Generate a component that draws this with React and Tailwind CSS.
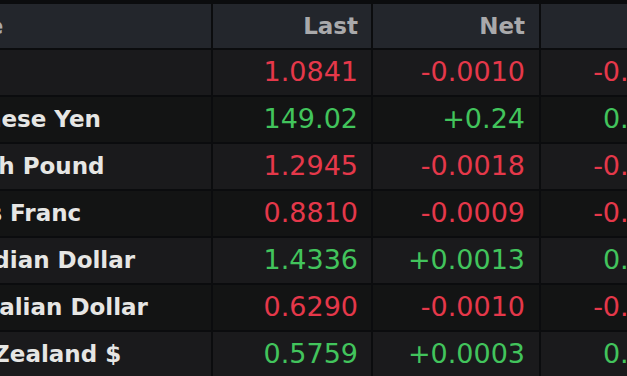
import React from "react";

const ROWS = [
  { name: "Euro", last: "1.0841", net: "-0.0010", pct: "-0.09", up: false },
  { name: "Japanese Yen", last: "149.02", net: "+0.24", pct: "0.16", up: true },
  { name: "British Pound", last: "1.2945", net: "-0.0018", pct: "-0.14", up: false },
  { name: "Swiss Franc", last: "0.8810", net: "-0.0009", pct: "-0.10", up: false },
  { name: "Canadian Dollar", last: "1.4336", net: "+0.0013", pct: "0.09", up: true },
  { name: "Australian Dollar", last: "0.6290", net: "-0.0010", pct: "-0.16", up: false },
  { name: "New Zealand $", last: "0.5759", net: "+0.0003", pct: "0.05", up: true },
];

export default function App() {
  return (
    <div className="w-[627px] h-[376px] overflow-hidden bg-[#0b0c0e] pt-[4px]" style={{ fontFamily: '"DejaVu Sans", sans-serif' }}>
      {/* table is wider than the window; first column runs off the left edge */}
      <div className="-ml-[87px] grid grid-cols-[298px_158px_166px_136px] gap-[2px] w-max">
        <div className="h-[44px] bg-[#23262c] flex items-center pl-4 text-[23px] font-bold text-[#a9a9ab]">Name</div>
        <div className="h-[44px] bg-[#23262c] flex items-center justify-end pr-[13px] text-[23px] font-bold text-[#a9a9ab]">Last</div>
        <div className="h-[44px] bg-[#23262c] flex items-center justify-end pr-[14px] text-[23px] font-bold text-[#a9a9ab]">Net</div>
        <div className="h-[44px] bg-[#23262c] flex items-center justify-end pr-[14px] text-[23px] font-bold text-[#a9a9ab]">%</div>

        {ROWS.map((r, i) => {
          const bg = i % 2 === 0 ? "bg-[#1a1a1c]" : "bg-[#131414]";
          const color = r.up ? "text-[#42c45c]" : "text-[#e5384a]";
          return (
            <React.Fragment key={r.name}>
              <div className={`h-[45px] ${bg} flex items-center pl-4 text-[23px] font-bold text-[#e6e6e4] whitespace-nowrap`}>{r.name}</div>
              <div className={`h-[45px] ${bg} flex items-center justify-end pr-[13px] text-[27px] ${color}`}>{r.last}</div>
              <div className={`h-[45px] ${bg} flex items-center justify-end pr-[14px] text-[27px] ${color}`}>{r.net}</div>
              <div className={`h-[45px] ${bg} flex items-center justify-end pr-[14px] text-[27px] ${color}`}>{r.pct}</div>
            </React.Fragment>
          );
        })}
      </div>
    </div>
  );
}
